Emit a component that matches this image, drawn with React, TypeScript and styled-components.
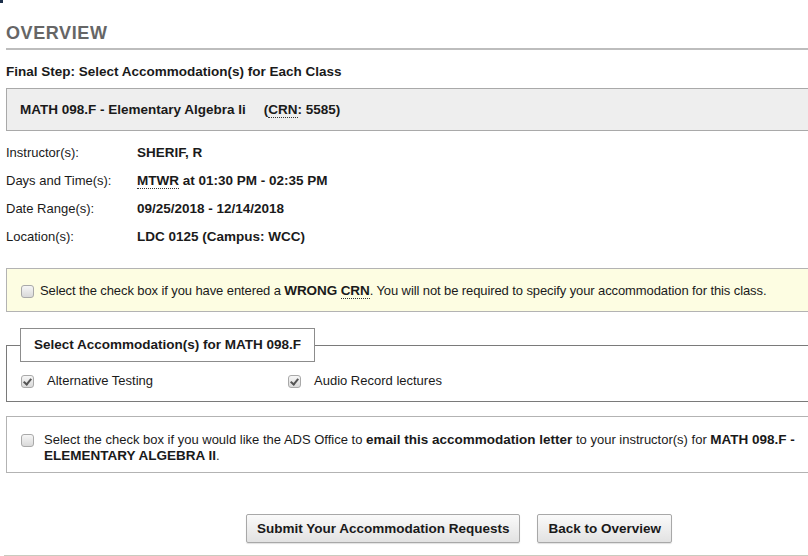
import React from 'react';
import styled, { createGlobalStyle } from 'styled-components';

const GlobalStyle = createGlobalStyle`
    html, body {
        margin: 0;
        padding: 0;
        background: #ffffff;
        overflow: hidden;
    }
    body {
        font-family: "Liberation Sans", Arial, sans-serif;
        font-size: 13px;
        color: #1a1a1a;
    }
    b {
        font-size: 13.5px;
    }
`

const Page = styled.div`
    width: 906px;
    padding: 0 0 0 6px;
    display: flex;
    flex-direction: column;
`

const CornerMark = styled.div`
    width: 3px;
    height: 3px;
    margin-left: -6px;
    background: #1c2f4a;
`

const Heading = styled.h1`
    margin: 19px 0 0;
    padding-bottom: 4px;
    border-bottom: 2px solid #bdbdbd;
    font-size: 18px;
    line-height: 22px;
    letter-spacing: 0.6px;
    font-weight: bold;
    color: #666666;
`

const StepTitle = styled.div`
    margin-top: 14px;
    font-size: 13.5px;
    font-weight: bold;
    line-height: 16px;
`

const CourseBar = styled.div`
    margin-top: 8px;
    height: 41px;
    line-height: 41px;
    padding-left: 13px;
    background: #eeeeee;
    border: 1px solid #a9a9a9;
    border-right: none;
    font-size: 13.5px;
    font-weight: bold;
`

const CrnNote = styled.span`
    margin-left: 18px;
`

const Abbr = styled.abbr`
    text-decoration: none;
    border-bottom: 1px dotted #333;
`

const Details = styled.dl`
    margin: 7px 0 0;
    display: grid;
    grid-template-columns: 131px auto;
    grid-auto-rows: 28px;
    align-items: center;
`

const Label = styled.dt`
    margin: 0;
`

const Value = styled.dd`
    margin: 0;
    font-size: 13.5px;
    font-weight: bold;
`

const Notice = styled.div<{ $tone: 'yellow' | 'white'; $top: number }>`
    margin-top: ${p => p.$top}px;
    display: flex;
    align-items: flex-start;
    background: ${p => (p.$tone === 'yellow' ? '#fdfde2' : '#ffffff')};
    border: 1px solid #b3b3b3;
    border-right: none;
    line-height: 16px;
`

const Check = styled.input.attrs({ type: 'checkbox' })`
    appearance: none;
    position: relative;
    margin: 0;
    width: 13px;
    height: 13px;
    flex: none;
    box-sizing: border-box;
    border: 1px solid #a9a9a9;
    border-radius: 3px;
    background: linear-gradient(#f6f6f6, #d9d9d9);

    &:checked::after {
        content: '';
        position: absolute;
        left: 3px;
        top: 1px;
        width: 3px;
        height: 6px;
        border: solid #555555;
        border-width: 0 2px 2px 0;
        transform: rotate(40deg);
    }
`

const NoticeCheck = styled(Check)<{ $gap: number }>`
    margin: 2px ${p => p.$gap}px 0 14px;
`

const NoticeText = styled.div<{ $tight?: boolean }>`
    flex: 1;
    letter-spacing: ${p => (p.$tight ? '-0.1px' : 'normal')};
`

const Fieldset = styled.fieldset`
    margin: 16px 0 0;
    padding: 10px 0 11px 14px;
    border: 1px solid #7a7a7a;
    border-right: none;
    min-width: 0;
`

const Legend = styled.legend`
    margin-left: -1px;
    padding: 0 13px;
    line-height: 32px;
    border: 1px solid #8c8c8c;
    background: #ffffff;
    font-size: 13.5px;
    font-weight: bold;
`

const Options = styled.div`
    display: grid;
    grid-template-columns: 267px 267px;
`

const Option = styled.label`
    display: flex;
    align-items: center;
    gap: 13px;
    line-height: 18px;
`

const Actions = styled.div`
    margin-top: 41px;
    display: flex;
    justify-content: center;
    gap: 17px;
`

const Button = styled.button`
    height: 29px;
    padding: 0 10px;
    font-family: inherit;
    font-size: 13.5px;
    font-weight: bold;
    color: #1a1a1a;
    background: linear-gradient(#fafafa, #e2e2e2);
    border: 1px solid #a8a8a8;
    border-radius: 2px;
    box-shadow: 0 1px 1px rgba(0, 0, 0, 0.12);
`

const Footer = styled.div`
    margin: 12px 0 0 -2px;
    height: 20px;
    border-top: 2px solid #c9cbbf;
`

export default function App() {
    return (
        <>
            <GlobalStyle />
            <Page>
                <CornerMark />
                <Heading>OVERVIEW</Heading>
                <StepTitle>Final Step: Select Accommodation(s) for Each Class</StepTitle>
                <CourseBar>
                    MATH 098.F - Elementary Algebra Ii
                    <CrnNote>(<Abbr title="Course Reference Number">CRN</Abbr>: 5585)</CrnNote>
                </CourseBar>
                <Details>
                    <Label>Instructor(s):</Label>
                    <Value>SHERIF, R</Value>
                    <Label>Days and Time(s):</Label>
                    <Value><Abbr title="Monday Tuesday Wednesday Thursday">MTWR</Abbr> at 01:30 PM - 02:35 PM</Value>
                    <Label>Date Range(s):</Label>
                    <Value>09/25/2018 - 12/14/2018</Value>
                    <Label>Location(s):</Label>
                    <Value>LDC 0125 (Campus: WCC)</Value>
                </Details>
                <Notice $tone="yellow" $top={18} style={{ padding: '14px 0 12px' }}>
                    <NoticeCheck $gap={6} />
                    <NoticeText $tight>
                        Select the check box if you have entered a <b>WRONG <Abbr title="Course Reference Number">CRN</Abbr></b>. You will not be required to specify your accommodation for this class.
                    </NoticeText>
                </Notice>
                <Fieldset>
                    <Legend>Select Accommodation(s) for MATH 098.F</Legend>
                    <Options>
                        <Option><Check defaultChecked />Alternative Testing</Option>
                        <Option><Check defaultChecked />Audio Record lectures</Option>
                    </Options>
                </Fieldset>
                <Notice $tone="white" $top={14} style={{ padding: '15px 0 8px' }}>
                    <NoticeCheck $gap={10} />
                    <NoticeText>
                        Select the check box if you would like the ADS Office to <b>email this accommodation letter</b> to your instructor(s) for <b>MATH 098.F -<br />ELEMENTARY ALGEBRA II</b>.
                    </NoticeText>
                </Notice>
                <Actions>
                    <Button>Submit Your Accommodation Requests</Button>
                    <Button>Back to Overview</Button>
                </Actions>
                <Footer />
            </Page>
        </>
    );
}
